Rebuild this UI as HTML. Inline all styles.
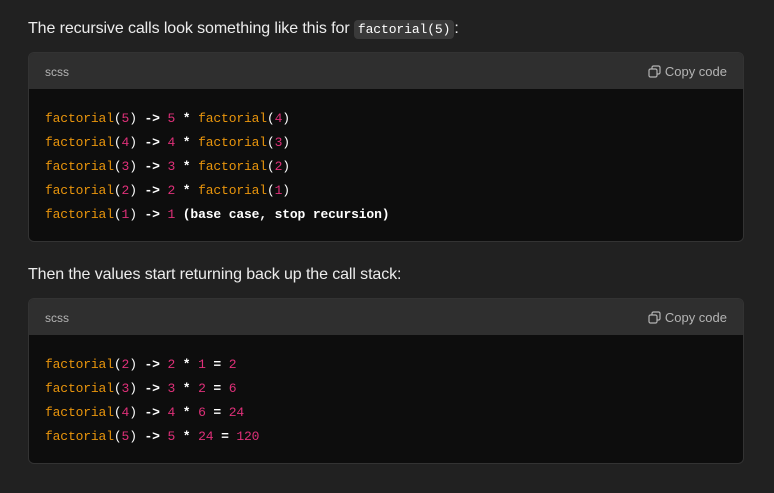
<!DOCTYPE html>
<html><head><style>
body{margin:0;background:#212121;width:774px;height:493px;overflow:hidden;font-family:"Liberation Sans",sans-serif;color:#ececec}
p{position:absolute;left:28px;margin:0;font-size:16px;letter-spacing:-0.1px}
code.i{font-family:"Liberation Mono",monospace;font-size:13px;background:#3a3a3a;border-radius:4px;padding:2px 4px;color:#fff}
.blk{position:absolute;left:28px;width:714px;border-radius:6px;overflow:hidden;border:1px solid #333}
.hd{height:36px;background:#2f2f2f;position:relative;font-size:12px;color:#b4b4b4}
.hd .l{position:absolute;left:16px;top:12px}
.hd .r{position:absolute;right:16px;top:11px;font-size:13px}
.bd{background:#0d0d0d;padding:18px 16px;font-family:"Liberation Mono",monospace;font-size:13px;line-height:24px;color:#fff;white-space:pre;letter-spacing:-0.15px}
.b{font-weight:bold}
.f{color:#e9950c}.n{color:#df3079}
</style></head><body>
<p style="top:20px">The recursive calls look something like this for <code class="i">factorial(5)</code>:</p>
<div class="blk" style="top:52px;height:188px">
<div class="hd"><span class="l">scss</span><span class="r"><svg width="13" height="13" viewBox="0 0 13 13" style="vertical-align:-2px;margin-right:4px"><rect x="4" y="1" width="8" height="8" rx="1.5" fill="none" stroke="#b4b4b4" stroke-width="1.2"/><rect x="1" y="4" width="8" height="8" rx="1.5" fill="#2f2f2f" stroke="#b4b4b4" stroke-width="1.2"/></svg>Copy code</span></div>
<div class="bd" style="height:116px"><span class="f">factorial</span>(<span class="n">5</span>) <span class="b">-&gt;</span> <span class="n">5</span> <span class="b">*</span> <span class="f">factorial</span>(<span class="n">4</span>)
<span class="f">factorial</span>(<span class="n">4</span>) <span class="b">-&gt;</span> <span class="n">4</span> <span class="b">*</span> <span class="f">factorial</span>(<span class="n">3</span>)
<span class="f">factorial</span>(<span class="n">3</span>) <span class="b">-&gt;</span> <span class="n">3</span> <span class="b">*</span> <span class="f">factorial</span>(<span class="n">2</span>)
<span class="f">factorial</span>(<span class="n">2</span>) <span class="b">-&gt;</span> <span class="n">2</span> <span class="b">*</span> <span class="f">factorial</span>(<span class="n">1</span>)
<span class="f">factorial</span>(<span class="n">1</span>) <span class="b">-&gt;</span> <span class="n">1</span> <span class="b">(base case, stop recursion)</span></div>
</div>
<p style="top:266px">Then the values start returning back up the call stack:</p>
<div class="blk" style="top:298px;height:164px">
<div class="hd"><span class="l">scss</span><span class="r"><svg width="13" height="13" viewBox="0 0 13 13" style="vertical-align:-2px;margin-right:4px"><rect x="4" y="1" width="8" height="8" rx="1.5" fill="none" stroke="#b4b4b4" stroke-width="1.2"/><rect x="1" y="4" width="8" height="8" rx="1.5" fill="#2f2f2f" stroke="#b4b4b4" stroke-width="1.2"/></svg>Copy code</span></div>
<div class="bd" style="height:92px"><span class="f">factorial</span>(<span class="n">2</span>) <span class="b">-&gt;</span> <span class="n">2</span> <span class="b">*</span> <span class="n">1</span> <span class="b">=</span> <span class="n">2</span>
<span class="f">factorial</span>(<span class="n">3</span>) <span class="b">-&gt;</span> <span class="n">3</span> <span class="b">*</span> <span class="n">2</span> <span class="b">=</span> <span class="n">6</span>
<span class="f">factorial</span>(<span class="n">4</span>) <span class="b">-&gt;</span> <span class="n">4</span> <span class="b">*</span> <span class="n">6</span> <span class="b">=</span> <span class="n">24</span>
<span class="f">factorial</span>(<span class="n">5</span>) <span class="b">-&gt;</span> <span class="n">5</span> <span class="b">*</span> <span class="n">24</span> <span class="b">=</span> <span class="n">120</span></div>
</div>
</body></html>
